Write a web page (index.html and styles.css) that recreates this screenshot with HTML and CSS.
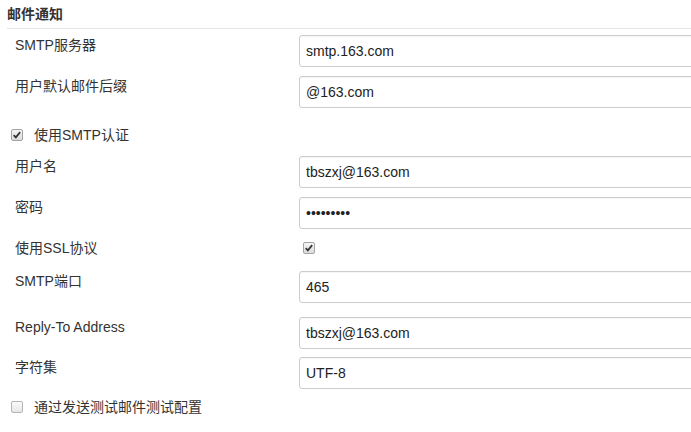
FILE: index.html
```html
<!DOCTYPE html>
<html lang="zh-CN">
<head>
<meta charset="utf-8">
<title>邮件通知</title>
<link rel="stylesheet" href="styles.css">
</head>
<body>
<div class="section">
  <div class="section-header">邮件通知</div>

  <div class="row r1">
    <div class="label">SMTP服务器</div>
    <input class="field" type="text" value="smtp.163.com" readonly>
  </div>
  <div class="row r1">
    <div class="label">用户默认邮件后缀</div>
    <input class="field" type="text" value="@163.com" readonly>
  </div>

  <div class="check-row">
    <span class="cb"><svg viewBox="0 0 12 12" width="10" height="10"><path d="M2 6.2 L4.6 8.8 L9.8 2.6" fill="none" stroke="#333" stroke-width="2.1"/></svg></span>
    <span class="check-text">使用SMTP认证</span>
  </div>

  <div class="row r1">
    <div class="label">用户名</div>
    <input class="field" type="text" value="tbszxj@163.com" readonly>
  </div>
  <div class="row r1">
    <div class="label">密码</div>
    <input class="field" type="password" value="123456789" readonly>
  </div>

  <div class="row ssl">
    <div class="label">使用SSL协议</div>
    <span class="cb cb-field"><svg viewBox="0 0 12 12" width="10" height="10"><path d="M2 6.2 L4.6 8.8 L9.8 2.6" fill="none" stroke="#333" stroke-width="2.1"/></svg></span>
  </div>

  <div class="row r-port">
    <div class="label">SMTP端口</div>
    <input class="field" type="text" value="465" readonly>
  </div>
  <div class="row r-reply">
    <div class="label">Reply-To Address</div>
    <input class="field" type="text" value="tbszxj@163.com" readonly>
  </div>
  <div class="row r-last">
    <div class="label">字符集</div>
    <input class="field" type="text" value="UTF-8" readonly>
  </div>

  <div class="check-row">
    <span class="cb cb-empty"></span>
    <span class="check-text">通过发送测试邮件测试配置</span>
  </div>
</div>
</body>
</html>
```

FILE: styles.css
```css
html, body {
  margin: 0;
  padding: 0;
  background: #fff;
  overflow: hidden;
}

body {
  font-family: "Liberation Sans", "Noto Sans CJK SC", sans-serif;
  font-size: 14px;
  color: #333;
}

.section {
  padding-left: 7px;
  width: 760px;
}

.section-header {
  font-weight: bold;
  line-height: 20px;
  padding: 4px 0 4px 0;
  border-bottom: 1px solid #e5e5e5;
  margin-bottom: 6px;
}

.row {
  display: flex;
  align-items: flex-start;
  padding-left: 8px;
}

.r1 { margin-bottom: 9px; }
.r-port { margin-bottom: 14px; }
.r-reply { margin-bottom: 8px; }
.r-last { margin-bottom: 0; }

.label {
  width: 284px;
  flex: none;
  line-height: 20px;
}

.field {
  flex: 1;
  box-sizing: border-box;
  height: 32px;
  margin: 0;
  padding: 0 6px;
  border: 1px solid #ccc;
  border-radius: 3px;
  box-shadow: inset 0 1px 1px rgba(0, 0, 0, 0.04);
  font-family: "Liberation Sans", sans-serif;
  font-size: 14px;
  color: #222;
  background: #fff;
  outline: none;
}

.check-row {
  display: flex;
  align-items: center;
  height: 16px;
  padding: 10px 0 13px 4px;
}

.cb {
  box-sizing: border-box;
  width: 12px;
  height: 12px;
  flex: none;
  border: 1px solid #a3a3a3;
  border-radius: 2px;
  background: linear-gradient(#f6f6f6, #dcdcdc);
  display: flex;
  align-items: center;
  justify-content: center;
}

.cb svg { display: block; }

.cb-empty {
  border-color: #b5b5b5;
  background: linear-gradient(#fbfbfb, #e6e6e6);
}

.check-text {
  margin-left: 11px;
  line-height: 16px;
}

.ssl {
  height: 20px;
  padding-top: 4px;
  padding-bottom: 9px;
}

.cb-field {
  margin-left: 4px;
}

.ssl .label {
  margin-top: -4px;
}
```
